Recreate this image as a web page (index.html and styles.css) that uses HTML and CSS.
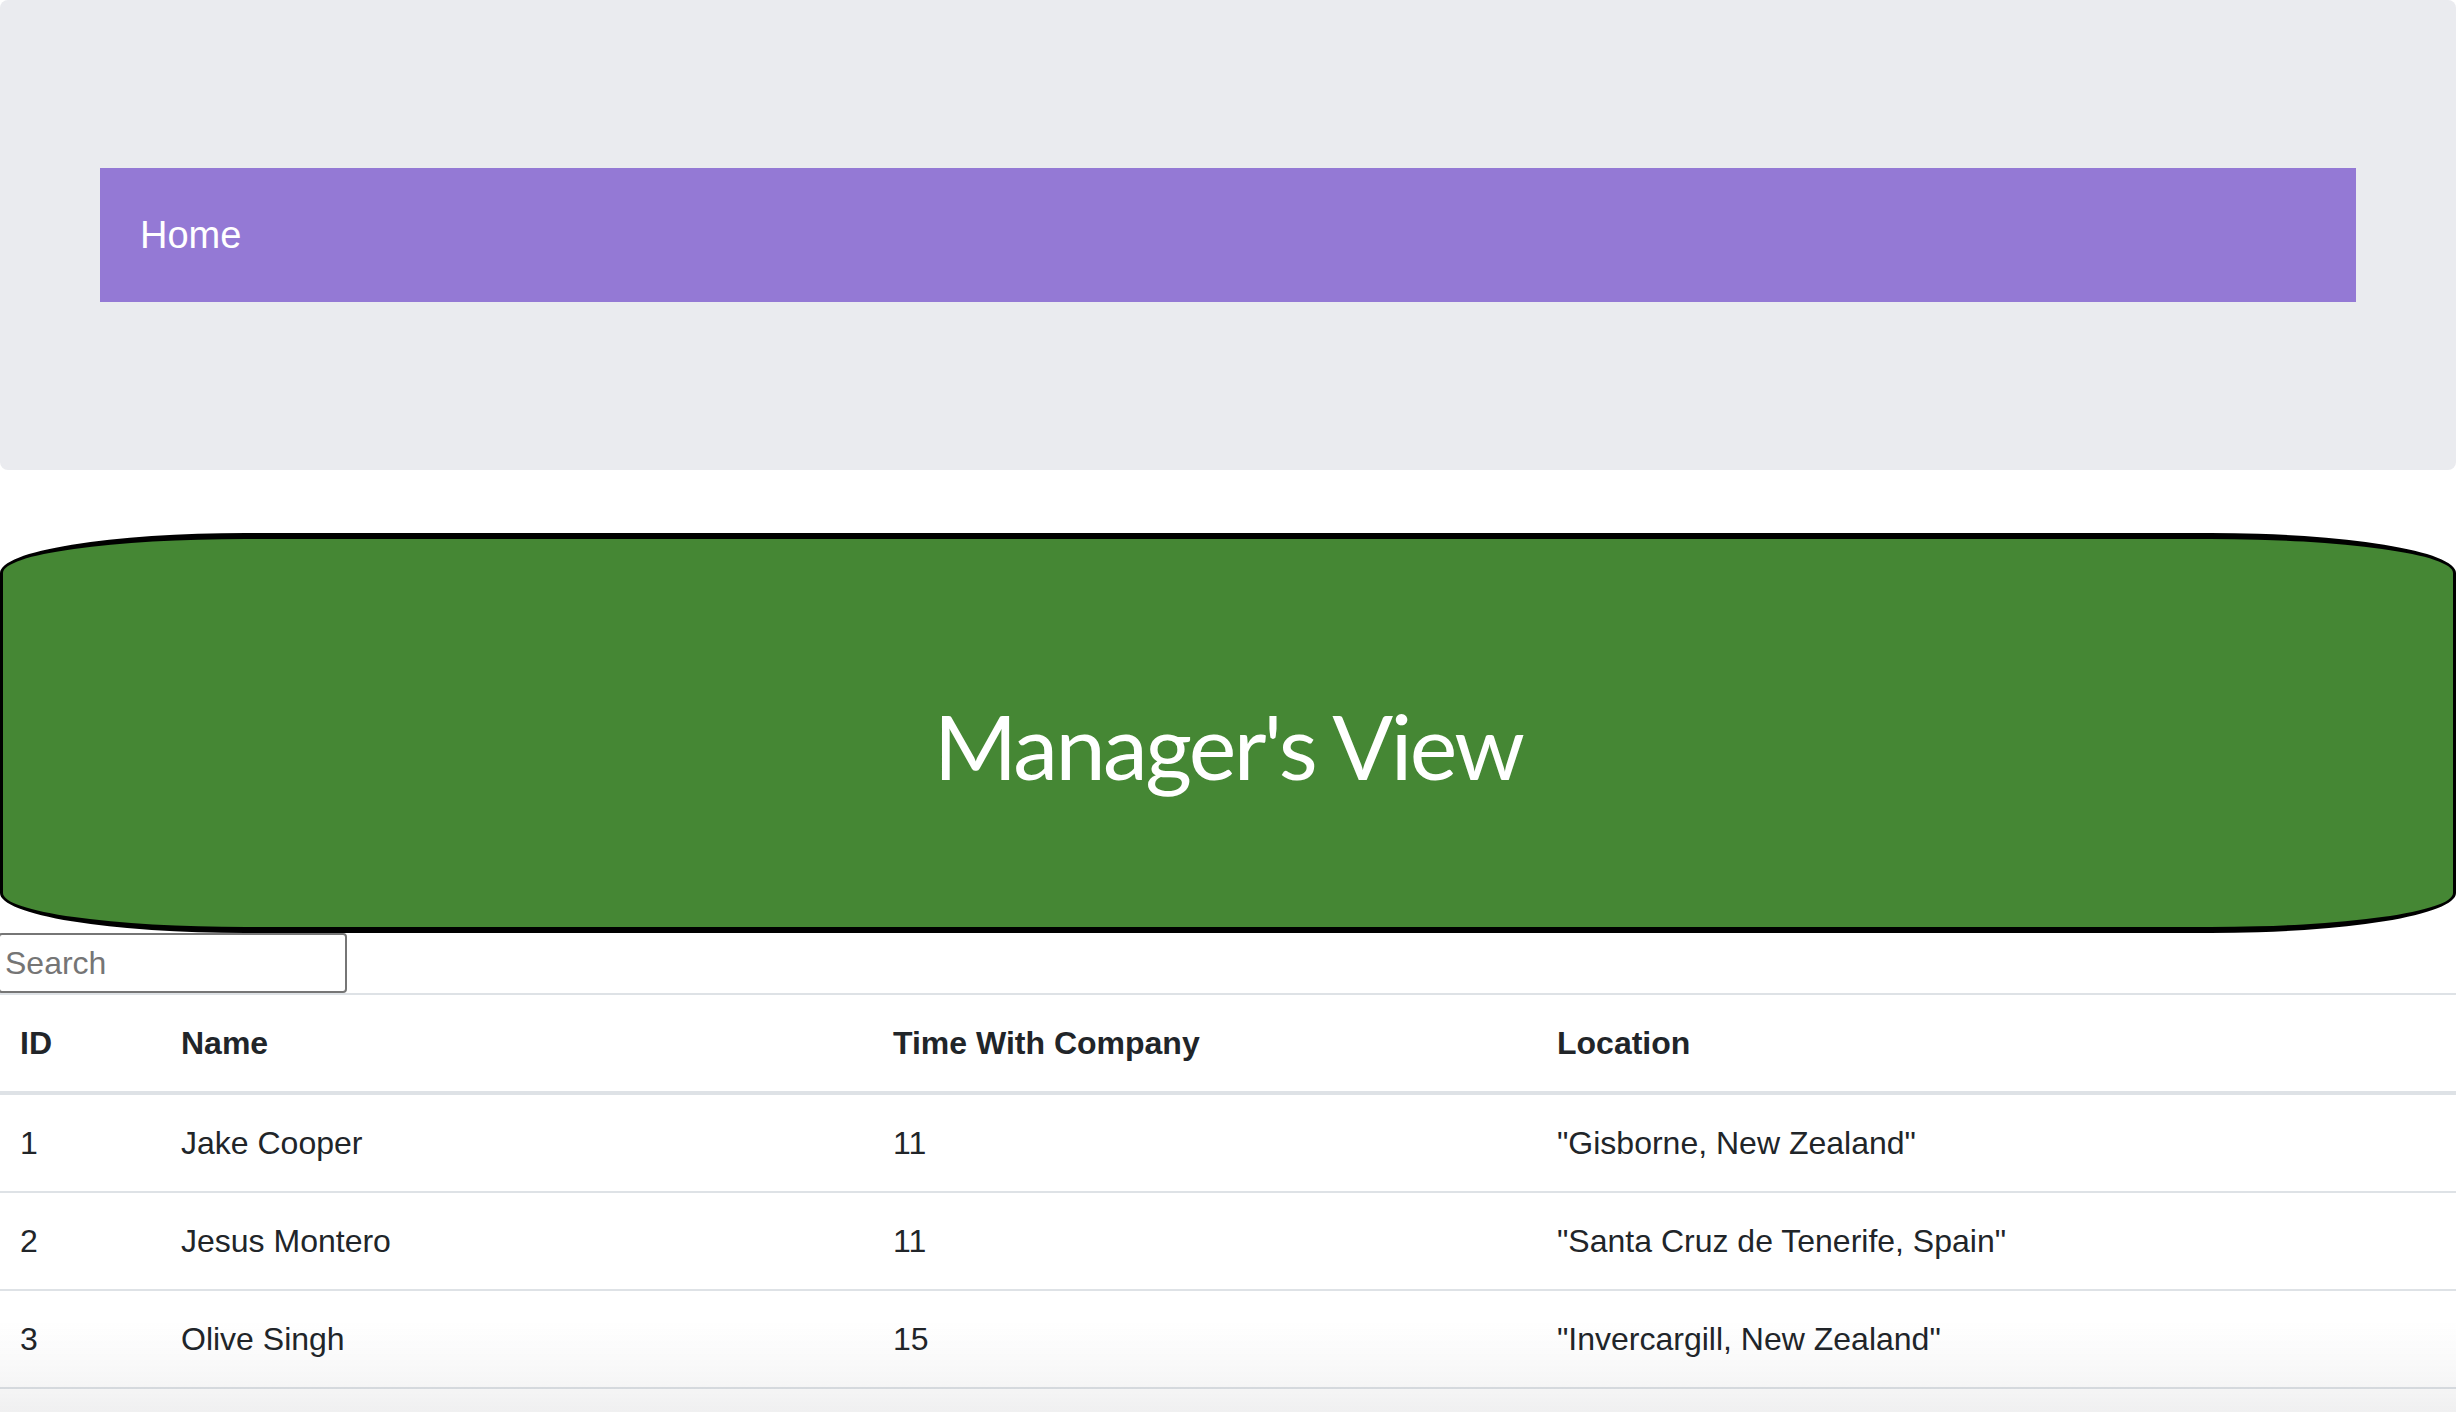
FILE: index.html
```html
<!DOCTYPE html>
<html lang="en">
<head>
<meta charset="utf-8">
<title>Manager's View</title>
<link rel="stylesheet" href="styles.css">
</head>
<body>
  <header class="jumbo">
    <nav class="navbar">
      <a class="nav-link" href="#">Home</a>
    </nav>
  </header>

  <section class="banner">
    <h1 class="banner-title">Manager's View</h1>
  </section>

  <input class="search" type="text" placeholder="Search">

  <table class="table">
    <colgroup>
      <col class="c-id">
      <col class="c-name">
      <col class="c-time">
      <col class="c-loc">
    </colgroup>
    <thead>
      <tr>
        <th>ID</th>
        <th>Name</th>
        <th>Time With Company</th>
        <th>Location</th>
      </tr>
    </thead>
    <tbody>
      <tr>
        <td>1</td>
        <td>Jake Cooper</td>
        <td>11</td>
        <td>"Gisborne, New Zealand"</td>
      </tr>
      <tr>
        <td>2</td>
        <td>Jesus Montero</td>
        <td>11</td>
        <td>"Santa Cruz de Tenerife, Spain"</td>
      </tr>
      <tr>
        <td>3</td>
        <td>Olive Singh</td>
        <td>15</td>
        <td>"Invercargill, New Zealand"</td>
      </tr>
    </tbody>
  </table>

  <div class="bottom-fade"></div>
</body>
</html>
```

FILE: styles.css
```css
html, body {
  margin: 0;
  padding: 0;
  background: #ffffff;
}

body {
  font-family: "Liberation Sans", Arial, sans-serif;
  color: #212529;
  overflow: hidden;
}

.jumbo {
  background: #eaebef;
  padding: 168px 100px;
  border-radius: 8px;
}

.navbar {
  background: #9479d5;
  height: 134px;
  display: flex;
  align-items: center;
  padding: 0 40px;
}

.nav-link {
  color: #ffffff;
  text-decoration: none;
  font-size: 38px;
  line-height: 1;
}

.banner {
  margin-top: 63px;
  height: 388px;
  background: #458734;
  border-style: solid;
  border-color: #000000;
  border-width: 6px 3px;
  border-radius: 10% / 10%;
  display: flex;
  align-items: center;
  justify-content: center;
}

.banner-title {
  margin: 24px 0 0 0;
  color: #ffffff;
  font-family: "Lato", "Open Sans", sans-serif;
  font-weight: 400;
  font-size: 90px;
  letter-spacing: -2.6px;
  line-height: 1;
}

.search {
  display: block;
  box-sizing: border-box;
  margin: 0 0 0 -2px;
  width: 349px;
  height: 60px;
  padding: 0 5px;
  border: 2px solid #767676;
  border-radius: 4px;
  font-family: "Liberation Sans", Arial, sans-serif;
  font-size: 32px;
  color: #212529;
  background: #ffffff;
}

.search::placeholder {
  color: #757575;
}

.table {
  width: 100%;
  table-layout: fixed;
  border-collapse: collapse;
  margin-top: 0;
  font-size: 32px;
  line-height: 48px;
}

.c-id { width: 161px; }
.c-name { width: 712px; }
.c-time { width: 664px; }
.c-loc { width: auto; }

.table th,
.table td {
  padding: 24px 20px;
  text-align: left;
  vertical-align: top;
  border-top: 2px solid #dee2e6;
  white-space: nowrap;
}

.table th {
  font-weight: 700;
  border-bottom: 4px solid #dee2e6;
}

.table tbody tr:last-child td {
  border-bottom: 2px solid #dee2e6;
}

.table thead + tbody tr:first-child td {
  border-top: 0;
}

.bottom-fade {
  position: fixed;
  left: 0;
  right: 0;
  bottom: 0;
  height: 92px;
  background: linear-gradient(to bottom, rgba(40, 40, 50, 0) 0%, rgba(40, 40, 50, 0.035) 60%, rgba(40, 40, 50, 0.07) 100%);
  pointer-events: none;
}
```
